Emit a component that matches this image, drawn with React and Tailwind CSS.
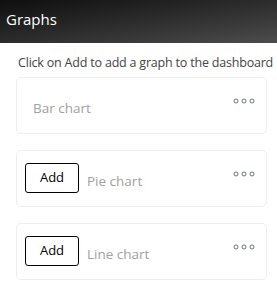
const Dots = () => (
  <svg width="24" height="6" viewBox="0 0 24 6" className="text-gray-500">
    <circle cx="3" cy="3" r="2" fill="none" stroke="currentColor" strokeWidth="1" />
    <circle cx="11" cy="3" r="2" fill="none" stroke="currentColor" strokeWidth="1" />
    <circle cx="19" cy="3" r="2" fill="none" stroke="currentColor" strokeWidth="1" />
  </svg>
);

const GraphCard = ({ label, canAdd }) => (
  <div className="h-[57px] border border-[#eeeeee] rounded-[5px] flex items-start pl-2 pr-[9px] bg-white">
    {canAdd && (
      <button className="mt-[12px] w-[54px] h-[30px] border border-black rounded-[3px] text-[13px] text-black bg-white shrink-0">
        Add
      </button>
    )}
    <span className="ml-[8px] mt-[21px] text-[13.5px] leading-[18px] text-[#a0a0a0]">{label}</span>
    <div className="ml-auto mt-[20px]">
      <Dots />
    </div>
  </div>
);

export default function App() {
  return (
    <div className="w-[277px] h-[296px] bg-white font-['Open_Sans',sans-serif]">
      <div className="h-[43px] bg-gradient-to-br from-[#0f0f0f] to-[#4d4d4d] flex items-center px-[6px]">
        <span className="text-white text-[15px] leading-none -mt-[4px]">Graphs</span>
      </div>
      <p className="mt-[11px] ml-[18px] text-[12.5px] leading-[18px] text-[#444444] whitespace-nowrap tracking-[-0.2px]">
        Click on Add to add a graph to the dashboard
      </p>
      <div className="mx-[16px] mt-[5px] mr-[10px] flex flex-col gap-[16px]">
        <GraphCard label="Bar chart" />
        <GraphCard label="Pie chart" canAdd />
        <GraphCard label="Line chart" canAdd />
      </div>
    </div>
  );
}
